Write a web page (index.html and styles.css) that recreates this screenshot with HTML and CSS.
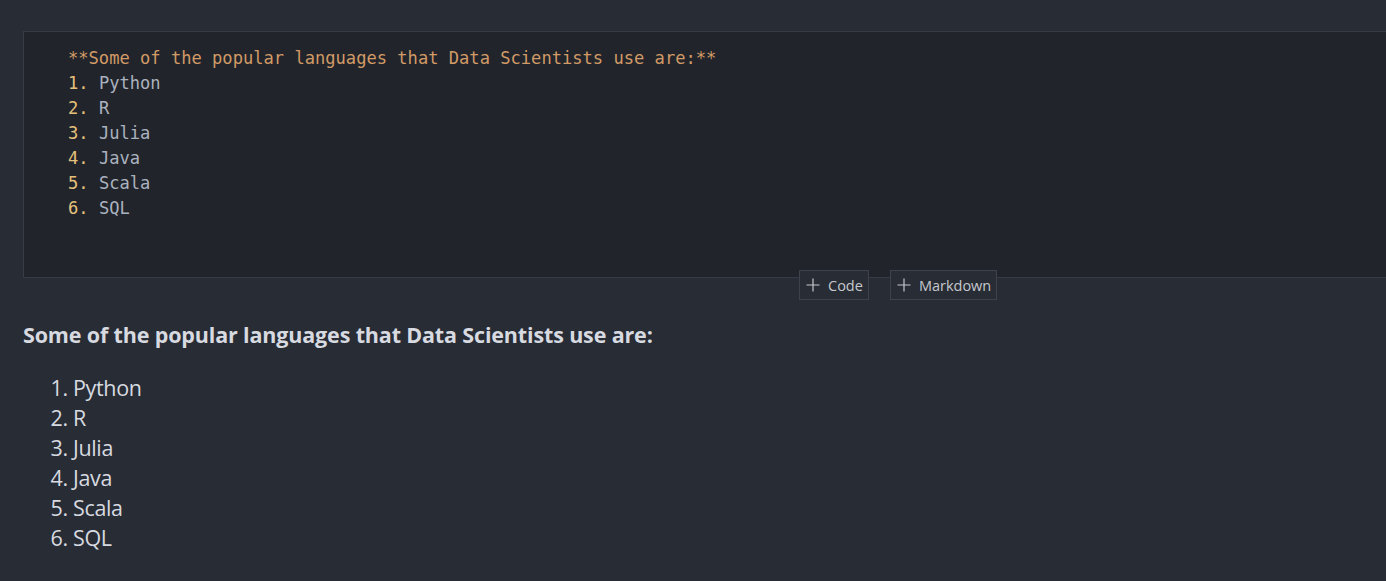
FILE: index.html
```html
<!DOCTYPE html>
<html>
<head>
<meta charset="utf-8">
<link rel="stylesheet" href="styles.css">
</head>
<body>
<div class="page">
  <div class="cell">
    <pre class="src"><span class="str">**Some of the popular languages that Data Scientists use are:**</span>
<span class="num">1.</span> Python
<span class="num">2.</span> R
<span class="num">3.</span> Julia
<span class="num">4.</span> Java
<span class="num">5.</span> Scala
<span class="num">6.</span> SQL</pre>
  </div>
  <div class="toolbar">
    <button class="btn"><svg width="14" height="14" viewBox="0 0 14 14"><path d="M7 0.5V13.5M0.5 7H13.5" stroke="#c5c8ce" stroke-width="1.2" fill="none"/></svg>Code</button>
    <button class="btn"><svg width="14" height="14" viewBox="0 0 14 14"><path d="M7 0.5V13.5M0.5 7H13.5" stroke="#c5c8ce" stroke-width="1.2" fill="none"/></svg>Markdown</button>
  </div>
  <div class="md">
    <p class="heading">Some of the popular languages that Data Scientists use are:</p>
    <ol class="list">
      <li>Python</li>
      <li>R</li>
      <li>Julia</li>
      <li>Java</li>
      <li>Scala</li>
      <li>SQL</li>
    </ol>
  </div>
</div>
</body>
</html>
```
FILE: styles.css
```css
html, body {
  margin: 0;
  padding: 0;
  background: #282c34;
  height: 100%;
  overflow: hidden;
}
.page {
  padding-top: 31px;
}
.cell {
  margin-left: 23px;
  margin-right: -10px;
  height: 245px;
  background: #21252b;
  border: 1px solid #363b45;
  box-sizing: content-box;
}
.src {
  margin: 0;
  padding: 14px 0 0 44px;
  font-family: "DejaVu Sans Mono", "Liberation Mono", monospace;
  font-size: 17.1px;
  line-height: 25px;
  color: #abb2bf;
  letter-spacing: 0;
}
.str { color: #d19a66; }
.num { color: #e5c07b; }
.toolbar {
  display: flex;
  gap: 21px;
  margin-top: -8px;
  margin-left: 799px;
  height: 30px;
}
.btn {
  display: flex;
  align-items: center;
  gap: 8px;
  height: 30px;
  box-sizing: border-box;
  padding: 0 5px 0 6px;
  background: #282c34;
  border: 1px solid #3d424c;
  color: #c5c8ce;
  font-family: "Open Sans", "Noto Sans", sans-serif;
  font-size: 14.5px;
  border-radius: 0;
}
.md {
  padding-left: 23px;
  font-family: "Open Sans", "Noto Sans", sans-serif;
  color: #d7dae0;
}
.heading {
  margin: 20px 0 0 0;
  font-size: 21.5px;
  font-weight: 700;
  line-height: 30px;
  letter-spacing: -0.15px;
}
.list {
  margin: 23px 0 0 0;
  padding-left: 50px;
  font-size: 21.5px;
  line-height: 30px;
  letter-spacing: -0.35px;
}
.list li { padding-left: 0; }
```
